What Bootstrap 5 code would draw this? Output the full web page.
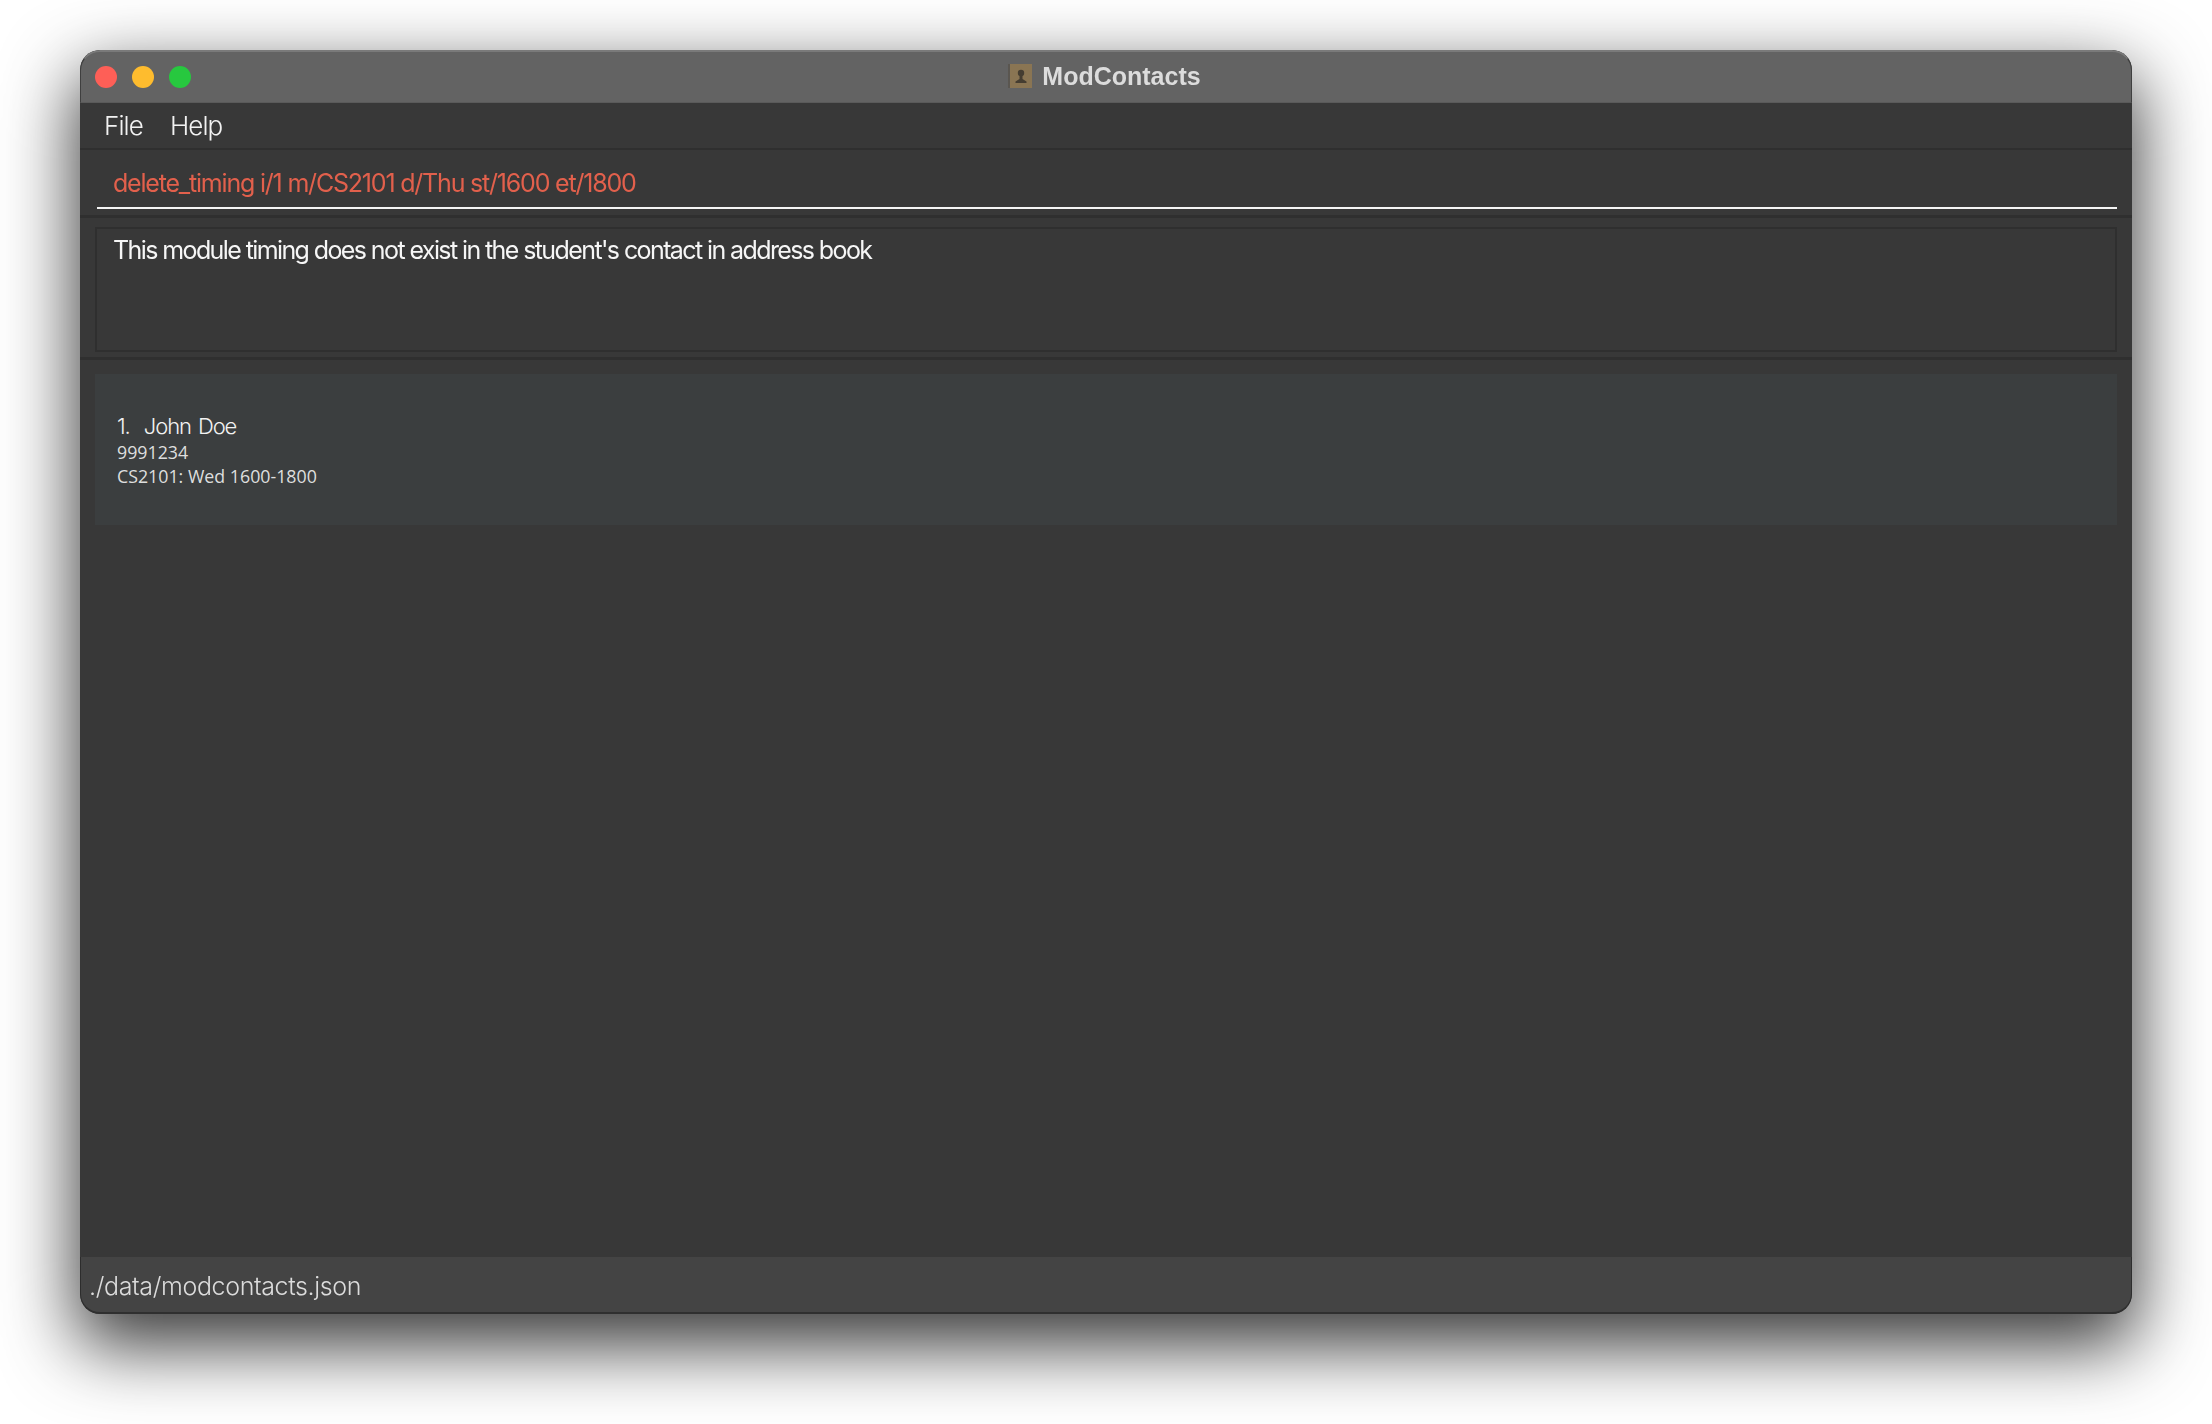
<!DOCTYPE html>
<html lang="en">
<head>
<meta charset="utf-8">
<title>ModContacts</title>
<link href="https://cdn.jsdelivr.net/npm/bootstrap@5.3.0/dist/css/bootstrap.min.css" rel="stylesheet">
<style>
html,body{height:100%;margin:0;background:#fff;overflow:hidden}
body{padding:50px 80px 110px;font-family:"Inter","Liberation Sans",sans-serif}
.app-window{height:1264px;border-radius:20px;background:#383838;box-shadow:0 28px 72px 4px rgba(0,0,0,.78);overflow:hidden}
.title-strip{height:53px;flex:none;background:#636363;border:1px solid #3f3f3f;border-top:2px solid #7a7a7a;border-bottom-color:#5a5a5a;padding-left:14px;border-top-left-radius:20px;border-top-right-radius:20px}
.light-dot{width:22px;height:22px;border-radius:50%;flex:none}
.light-gap{gap:15px}
.dot-red{background:#fe5f57}.dot-amber{background:#febc2e}.dot-green{background:#27c83f}
.title-center{left:0;right:0;top:0;bottom:2px;padding-right:3px;gap:10px;color:#dcdcdc;font:700 25px "Liberation Sans",sans-serif;filter:blur(.6px)}
.menu-strip{height:47px;flex:none;border-bottom:2px solid #2f2f2f;padding:0 0 0 24px;gap:27px;color:#f2f2f2;font-size:26px;font-weight:300;letter-spacing:-.9px}
.menu-entry{filter:blur(.3px)}
.command-wrap{height:68px;flex:none;padding:0 15px 0 17px;border-bottom:3px solid #2f2f2f}
.command-field{height:59px;border-bottom:2px solid #f4f4f4;padding:15px 0 0 16px;color:#e2604c;font-size:25px;line-height:36px;letter-spacing:-1.2px;filter:blur(.25px)}
.result-wrap{height:142px;flex:none;padding:9px 15px 6px 15px;border-bottom:3px solid #2f2f2f}
.result-box{height:125px;border:2px solid #2f2f2f;padding:3px 0 0 16px;color:#f6f6f6;font-size:25px;line-height:36px;letter-spacing:-1.6px;filter:blur(.25px)}
.list-wrap{flex:1 1 auto;padding:14px 15px 0 15px;min-height:0}
.person-item{height:151px;background:#3b3e3f;padding:39px 0 0 22px;color:#f2f2f2}
.person-name{font-size:22px;font-weight:300;line-height:27px;letter-spacing:-1.1px;word-spacing:2px}
.person-detail{font-family:"Open Sans",sans-serif;font-size:17.8px;line-height:24px;color:#dedede;margin-top:0}
.status-strip{height:57px;flex:none;background:#444;border:1px solid #2d2d2d;border-top:0;border-bottom:2px solid #2f2f2f;border-bottom-left-radius:20px;border-bottom-right-radius:20px;padding:5px 0 0 8px;color:#dcdcdc;font-size:25px;font-weight:300;letter-spacing:-.37px}
.status-strip span{filter:blur(.3px)}
</style>
</head>
<body>
<div class="app-window d-flex flex-column">
  <div class="title-strip position-relative d-flex align-items-center">
    <div class="d-flex light-gap">
      <span class="light-dot dot-red"></span>
      <span class="light-dot dot-amber"></span>
      <span class="light-dot dot-green"></span>
    </div>
    <div class="title-center position-absolute d-flex align-items-center justify-content-center">
      <svg width="24" height="24" viewBox="0 0 24 24" aria-hidden="true"><rect x="0" y="0" width="24" height="24" fill="#5a5650"/><rect x="2" y="0" width="22" height="24" fill="#8a7553"/><circle cx="13" cy="9" r="3.2" fill="#453d31"/><path d="M11.500 11h3v4l4 2.500V19h-11v-1.500l4-2.500z" fill="#453d31"/></svg>
      <span>ModContacts</span>
    </div>
  </div>
  <div class="menu-strip d-flex align-items-center">
    <span class="menu-entry">File</span>
    <span class="menu-entry">Help</span>
  </div>
  <div class="command-wrap">
    <div class="command-field">delete_timing i/1 m/CS2101 d/Thu st/1600 et/1800</div>
  </div>
  <div class="result-wrap">
    <div class="result-box">This module timing does not exist in the student's contact in address book</div>
  </div>
  <div class="list-wrap">
    <div class="person-item">
      <div class="person-name">1.&nbsp; John Doe</div>
      <div class="person-detail">9991234</div>
      <div class="person-detail">CS2101: Wed 1600-1800</div>
    </div>
  </div>
  <div class="status-strip d-flex align-items-center"><span>./data/modcontacts.json</span></div>
</div>
<script src="https://cdn.jsdelivr.net/npm/bootstrap@5.3.0/dist/js/bootstrap.bundle.min.js"></script>
</body>
</html>
